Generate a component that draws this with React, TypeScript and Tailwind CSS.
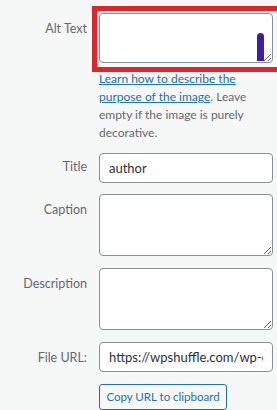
const font = "font-['Lato','Liberation_Sans',sans-serif]";

function Label({ text, pad = "pt-[7px]" }: { text: string; pad?: string }) {
  return (
    <div className={`w-[87px] shrink-0 text-right text-[12.5px] leading-[18px] text-[#646970] ${pad}`}>
      {text}
    </div>
  );
}

function Row({ label, pad, children }: { label: string; pad?: string; children: React.ReactNode }) {
  return (
    <div className="flex gap-3">
      <Label text={label} pad={pad} />
      <div className="w-[174px] shrink-0">{children}</div>
    </div>
  );
}

const box =
  "block w-full rounded-[4px] border border-[#8c8f94] bg-white text-[13px] text-[#2c3338] outline-none";

export default function App() {
  return (
    <div className={`min-h-[410px] w-[277px] overflow-hidden bg-[#f6f7f7] pt-[13px] ${font}`}>
      <Row label="Alt Text">
        <div className="relative">
          <textarea className={`${box} h-[50px]`} />
          <span className="absolute left-[158px] top-[20px] h-[28px] w-[7px] rounded-t-full bg-[#3a1fa5]" />
          <div className="pointer-events-none absolute -left-[7px] -top-[7px] h-[66px] w-[192px] border-[5px] border-[#e3242b]" />
        </div>
        <p className="mt-[7px] text-[12px] leading-[18px] text-[#646970]">
          <a href="#" className="text-[#2271b1] underline">
            Learn how to describe the
            <br />
            purpose of the image
          </a>
          . Leave
          <br />
          empty if the image is purely
          <br />
          decorative.
        </p>
      </Row>

      <div className="mt-[11px]">
        <Row label="Title" pad="pt-[5px]">
          <input className={`${box} h-[30px] px-[9px]`} defaultValue="author" />
        </Row>
      </div>

      <div className="mt-[11px]">
        <Row label="Caption">
          <textarea className={`${box} h-[62px]`} />
        </Row>
      </div>

      <div className="mt-[12px]">
        <Row label="Description">
          <textarea className={`${box} h-[62px]`} />
        </Row>
      </div>

      <div className="mt-[12px]">
        <Row label="File URL:">
          <input
            readOnly
            className={`${box} h-[30px] bg-[#f0f0f1] px-[9px]`}
            defaultValue="https://wpshuffle.com/wp-content/uploads/author.jpg"
          />
        </Row>
      </div>

      <div className="mt-[11px]">
        <Row label="">
          <button className="h-[26px] w-[128px] rounded-[3px] border border-[#2271b1] bg-[#f6f7f7] text-[11.5px] text-[#2271b1]">
            Copy URL to clipboard
          </button>
        </Row>
      </div>
    </div>
  );
}
